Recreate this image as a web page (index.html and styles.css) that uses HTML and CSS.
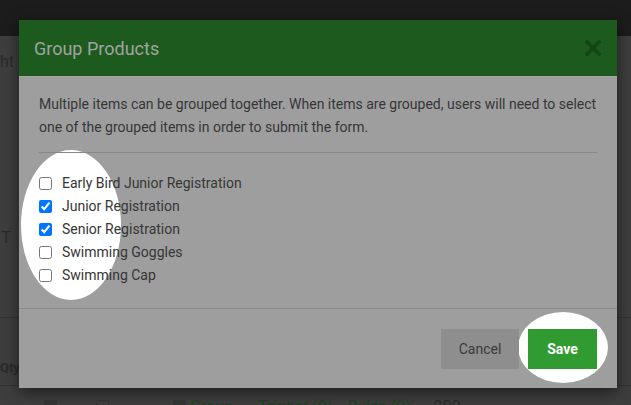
FILE: index.html
```html
<!DOCTYPE html>
<html>
<head>
    <meta charset="UTF-8">
    <title>Group Products</title>
    <link rel="stylesheet" href="styles.css">
</head>
<body>
    <div class="topbar"></div>
    <div class="page">
        <div class="page-title">ght by</div>
        <div class="field">T</div>
        <div class="table">
            <div class="table-head">Qty</div>
            <div class="table-row">
                <span class="box box-dark"></span>
                <span class="box"></span>
                <span class="box box-dark box-group"></span>
                <span class="link link-group">Group</span>
                <span class="link link-trigger">Trigger (0)</span>
                <span class="link link-rules">Rules (0)</span>
                <span class="qty">200</span>
            </div>
        </div>
    </div>

    <div class="modal">
        <span class="spot spot-list"></span>
        <span class="spot spot-save"></span>

        <div class="modal-header">
            <h2>Group Products</h2>
            <svg class="close" width="16" height="16" viewBox="0 0 16 16">
                <path d="M2 2 L14 14 M14 2 L2 14" stroke="#144514" stroke-width="3.6" stroke-linecap="square"/>
            </svg>
        </div>

        <div class="modal-body">
            <p>Multiple items can be grouped together. When items are grouped, users will need to select one of the grouped items in order to submit the form.</p>
            <hr>
            <ul class="items">
                <li><label><input type="checkbox"> Early Bird Junior Registration</label></li>
                <li><label><input type="checkbox" checked> Junior Registration</label></li>
                <li><label><input type="checkbox" checked> Senior Registration</label></li>
                <li><label><input type="checkbox"> Swimming Goggles</label></li>
                <li><label><input type="checkbox"> Swimming Cap</label></li>
            </ul>
        </div>

        <div class="modal-footer">
            <button class="btn btn-cancel">Cancel</button>
            <button class="btn btn-save">Save</button>
        </div>
    </div>
</body>
</html>
```

FILE: styles.css
```css
body {
    margin: 0;
    background-color: #3e3e3e;
    font-family: Roboto, "Liberation Sans", sans-serif;
    overflow: hidden;
    height: 405px;
}
.topbar {
    height: 36px;
    background-color: #1c1c1c;
}
.page {
    color: #2a2a2a;
    font-size: 16px;
}
.page-title {
    height: 52px;
    line-height: 52px;
    margin-left: -9px;
}
.field {
    margin-top: 139px;
    line-height: 20px;
    font-size: 17px;
    padding-left: 1px;
}
.table {
    margin-top: 70px;
    border-top: 1px solid #333333;
}
.table-head {
    height: 27px;
    padding-top: 40px;
    line-height: 20px;
    font-size: 13px;
    font-weight: bold;
    border-bottom: 1px solid #333333;
}
.table-row {
    display: flex;
    align-items: center;
    padding-top: 10px;
    height: 20px;
}
.box {
    width: 11px;
    height: 11px;
    border: 1px solid #353535;
    border-radius: 2px;
    margin-left: 44px;
}
.box + .box {
    margin-left: 39px;
}
.box-dark {
    background-color: #353535;
}
.box.box-group {
    margin-left: 64px;
}
.link {
    color: #1d451d;
}
.link-group { margin-left: 4px; }
.link-trigger { margin-left: 25px; }
.link-rules { margin-left: 15px; }
.qty { margin-left: 23px; }

.modal {
    position: absolute;
    left: 19px;
    top: 20px;
    width: 598px;
    background-color: #9e9e9e;
    box-shadow: 0 4px 14px rgba(0, 0, 0, 0.55);
}
.spot {
    position: absolute;
    background-color: #ffffff;
    border-radius: 50%;
    z-index: 0;
}
.spot-list {
    left: 2px;
    top: 130px;
    width: 100px;
    height: 150px;
}
.spot-save {
    left: 499px;
    top: 292px;
    width: 90px;
    height: 71px;
}
.modal-header {
    height: 56px;
    background-color: #1d5a1d;
    border-bottom: 1px solid #a4a4a4;
    display: flex;
    align-items: center;
    justify-content: space-between;
    padding: 0 16px 0 15px;
}
.modal-header h2 {
    margin: 0;
    font-size: 18px;
    font-weight: normal;
    color: #a0a4a0;
}
.modal-body {
    padding: 16px 20px 21px;
    color: #363636;
    font-size: 14px;
}
.modal-body > *,
.modal-footer > * {
    position: relative;
    z-index: 1;
}
.modal-body p {
    margin: 0;
    line-height: 23px;
}
.modal-body hr {
    margin: 13px 0 19px;
    border: none;
    border-top: 1px solid #878787;
}
.items {
    list-style: none;
    margin: 0;
    padding: 0;
}
.items li {
    height: 23px;
    line-height: 23px;
}
.items label {
    display: flex;
    align-items: center;
}
.items input {
    margin: 0 10px 0 0;
    width: 13px;
    height: 13px;
}
.modal-footer {
    border-top: 1px solid #8a8a8a;
    padding: 20px 20px 19px;
    display: flex;
    justify-content: flex-end;
    gap: 9px;
}
.btn {
    height: 40px;
    border: none;
    font-family: Roboto, "Liberation Sans", sans-serif;
    font-size: 14px;
    border-radius: 0;
}
.btn-cancel {
    width: 78px;
    background-color: #8e8e8e;
    color: #3a3a3a;
}
.btn-save {
    width: 69px;
    background-color: #309b30;
    color: #ffffff;
    font-weight: bold;
}
```
